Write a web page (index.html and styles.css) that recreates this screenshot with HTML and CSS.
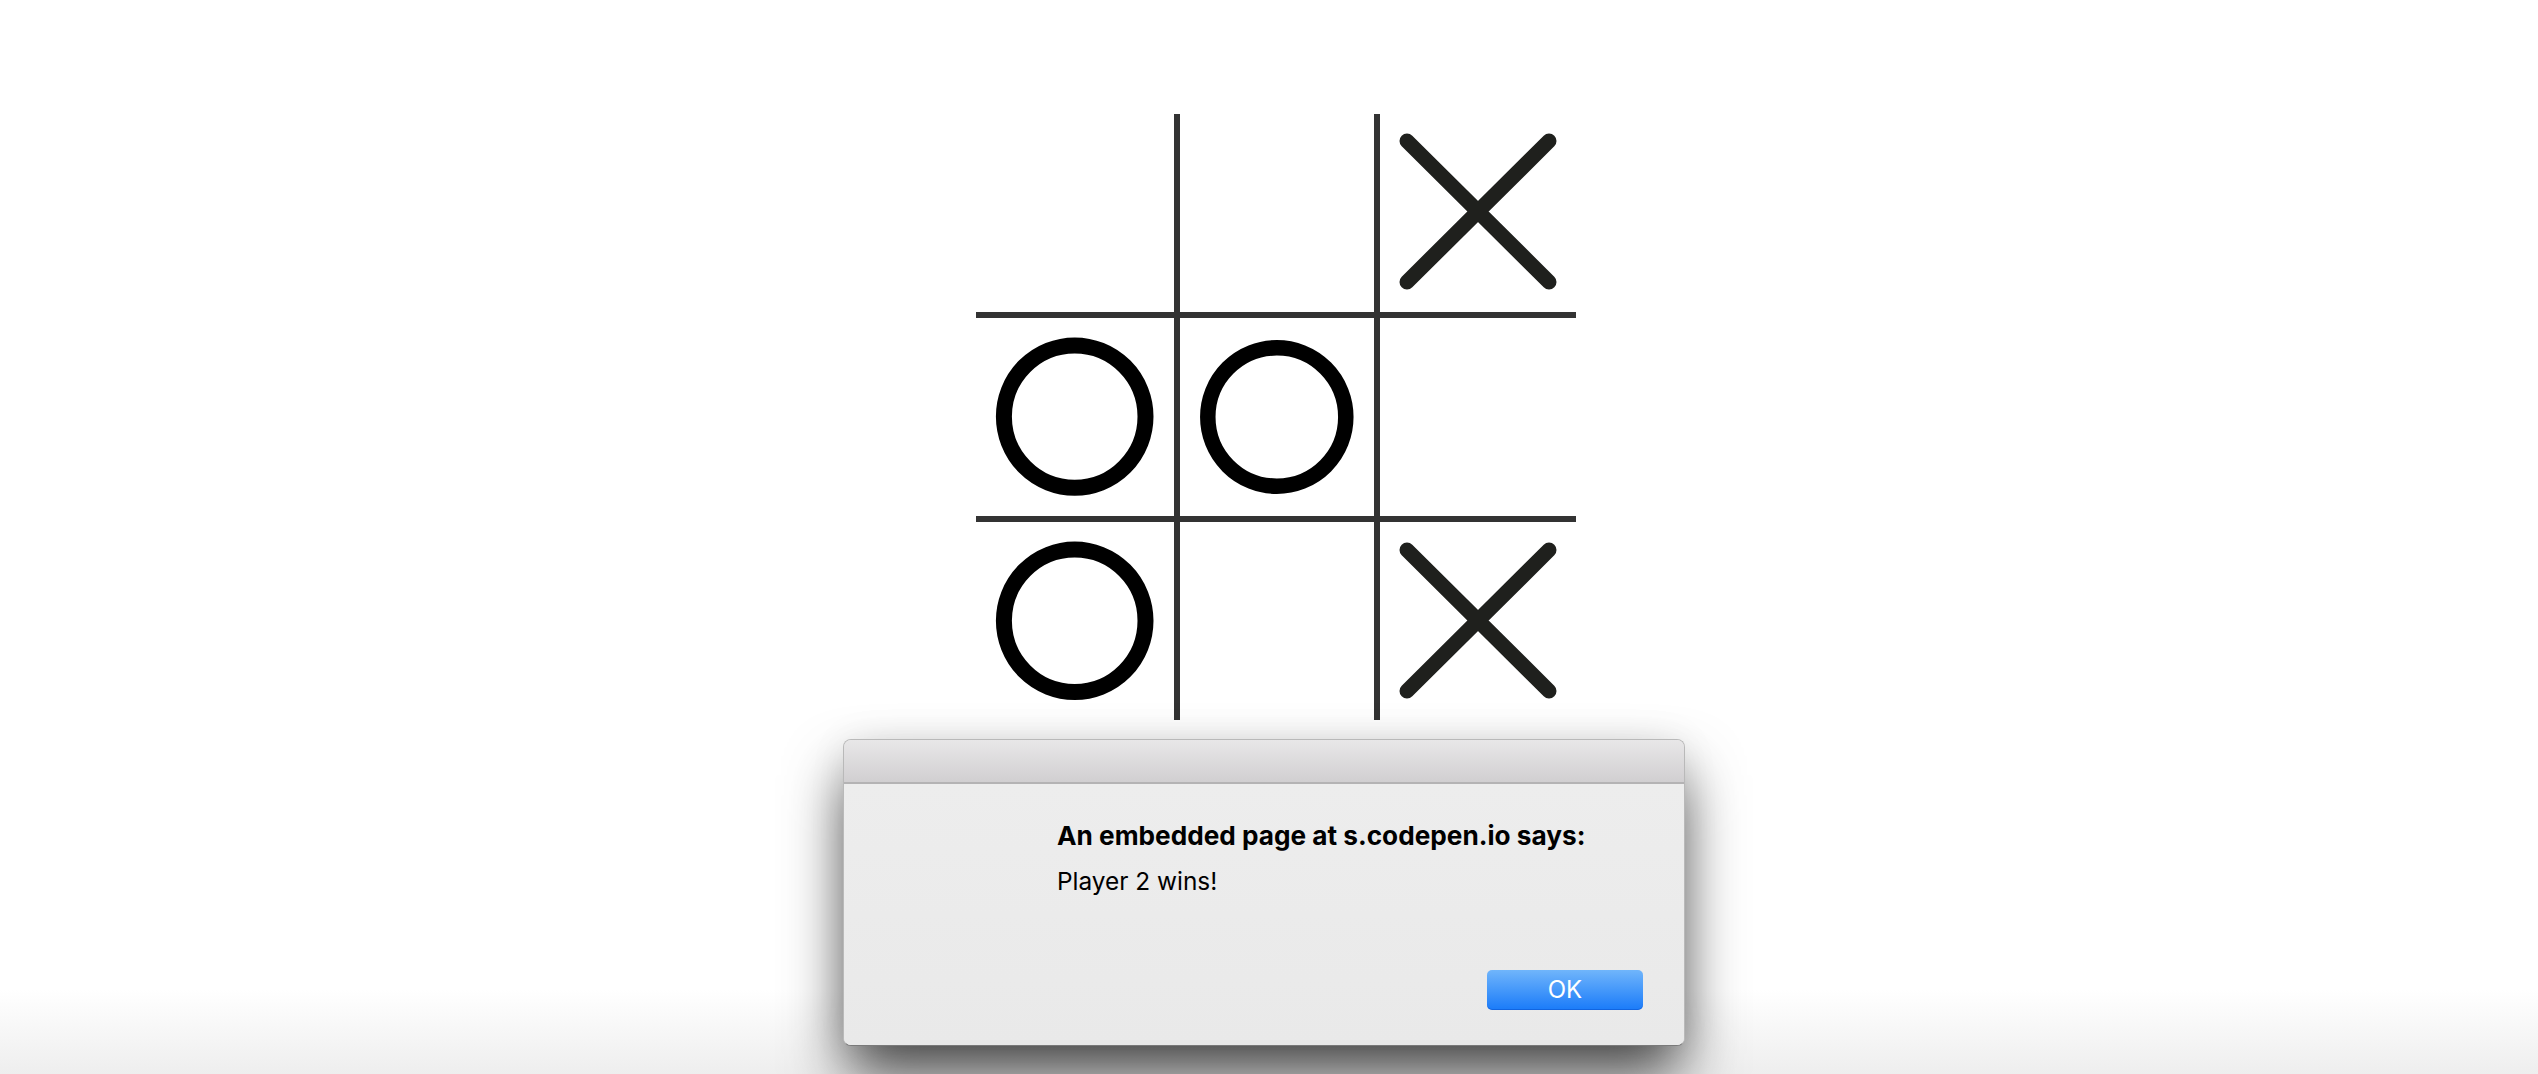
FILE: index.html
```html
<!DOCTYPE html>
<html>
<head>
<meta charset="utf-8">
<title>Tic Tac Toe</title>
<link rel="stylesheet" href="styles.css">
</head>
<body>
<div class="board">
  <div class="cell"></div>
  <div class="cell"></div>
  <div class="cell">
    <svg class="mark" viewBox="0 0 196 198" width="196" height="198"><path class="x" d="M27 27 L169 168 M169 27 L27 168"/></svg>
  </div>
  <div class="cell">
    <svg class="mark" viewBox="0 0 198 198" width="198" height="198"><ellipse class="o" cx="98.7" cy="98.6" rx="70.8" ry="71.2"/></svg>
  </div>
  <div class="cell">
    <svg class="mark" viewBox="0 0 194 198" width="194" height="198"><ellipse class="o o2" cx="96.8" cy="99" rx="69" ry="69.2"/></svg>
  </div>
  <div class="cell"></div>
  <div class="cell">
    <svg class="mark" viewBox="0 0 198 198" width="198" height="198"><ellipse class="o" cx="98.7" cy="98.8" rx="70.8" ry="71.2"/></svg>
  </div>
  <div class="cell"></div>
  <div class="cell">
    <svg class="mark" viewBox="0 0 196 198" width="196" height="198"><path class="x" d="M27 28 L169 169 M169 28 L27 169"/></svg>
  </div>
</div>

<div class="dialog">
  <div class="titlebar"></div>
  <div class="dialog-body">
    <div class="dialog-title">An embedded page at s.codepen.io says:</div>
    <div class="dialog-msg">Player 2 wins!</div>
    <div class="dialog-actions">
      <button class="ok">OK</button>
    </div>
  </div>
</div>
</body>
</html>
```

FILE: styles.css
```css
html, body {
  margin: 0;
  padding: 0;
}
body {
  width: 2538px;
  height: 1074px;
  overflow: hidden;
  position: relative;
  font-family: Inter, "Liberation Sans", Arial, sans-serif;
  background: linear-gradient(to bottom, #ffffff 0, #ffffff 990px, #eeeeee 1074px);
}

.board {
  display: grid;
  grid-template-columns: 198px 194px 196px;
  grid-template-rows: 198px 198px 198px;
  gap: 6px;
  background: #333333;
  width: 600px;
  margin: 114px 0 0 976px;
}
.cell {
  background: #ffffff;
  position: relative;
}
.mark {
  display: block;
}
.x {
  stroke: #1f201d;
  stroke-width: 15;
  stroke-linecap: round;
  fill: none;
}
.o {
  fill: none;
  stroke: #000000;
  stroke-width: 16;
}
.o2 {
  stroke-width: 15.5;
}

.dialog {
  position: absolute;
  left: 843px;
  top: 739px;
  width: 842px;
  height: 307px;
  box-sizing: border-box;
  border: 1px solid #b9b9b9;
  border-bottom-color: #7a7a7a;
  border-radius: 8px;
  background: #ececec;
  box-shadow: 0 32px 60px -4px rgba(0, 0, 0, 0.72), 0 0 40px rgba(0, 0, 0, 0.06);
  overflow: hidden;
  display: flex;
  flex-direction: column;
}
.titlebar {
  height: 42px;
  flex: none;
  background: linear-gradient(to bottom, #e8e7e8 0%, #d1cfd1 100%);
  border-bottom: 2px solid #b4b3b4;
}
.dialog-body {
  flex: 1;
  padding: 40px 41px 0 213px;
  background: linear-gradient(to bottom, #ededed 0%, #e9e9e9 100%);
  display: flex;
  flex-direction: column;
}
.dialog-title {
  font-size: 26.2px;
  line-height: 24px;
  font-weight: 700;
  color: #000000;
}
.dialog-msg {
  margin-top: 22px;
  font-size: 24.4px;
  line-height: 22px;
  color: #000000;
}
.dialog-actions {
  display: flex;
  justify-content: flex-end;
  margin-top: 78px;
}
.ok {
  width: 156px;
  height: 40px;
  border: none;
  border-radius: 5px;
  background: linear-gradient(to bottom, #70b5fb 0%, #1a7bf9 100%);
  box-shadow: inset 0 -1px 0 rgba(0, 60, 180, 0.35);
  color: #ffffff;
  font-family: Inter, "Liberation Sans", Arial, sans-serif;
  font-size: 24px;
  line-height: 40px;
  padding: 0;
}
```
